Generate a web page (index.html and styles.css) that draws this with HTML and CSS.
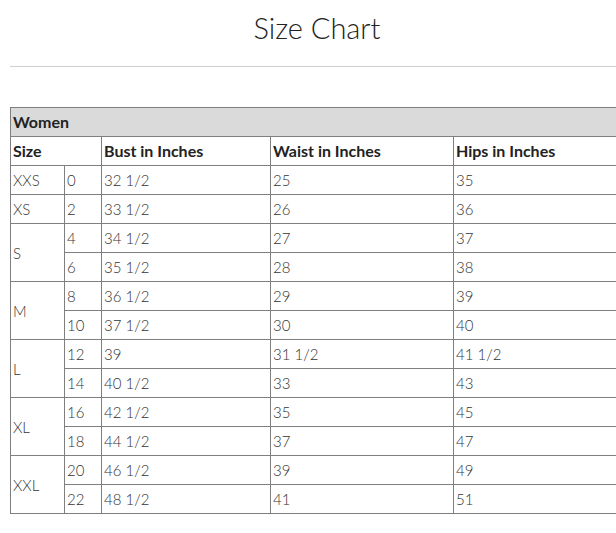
FILE: index.html
```html
<!DOCTYPE html>
<html>
<head>
<meta charset="utf-8">
<link rel="stylesheet" href="styles.css">
</head>
<body>
<div class="page">
  <h1 class="title">Size Chart</h1>
  <div class="rule"></div>
  <table class="chart">
    <colgroup>
      <col class="c1"><col class="c2"><col class="c3"><col class="c4"><col class="c5">
    </colgroup>
    <tr class="group"><th colspan="5">Women</th></tr>
    <tr class="head"><th colspan="2">Size</th><th>Bust in Inches</th><th>Waist in Inches</th><th>Hips in Inches</th></tr>
    <tr><td>XXS</td><td>0</td><td>32 1/2</td><td>25</td><td>35</td></tr>
    <tr><td>XS</td><td>2</td><td>33 1/2</td><td>26</td><td>36</td></tr>
    <tr><td rowspan="2">S</td><td>4</td><td>34 1/2</td><td>27</td><td>37</td></tr>
    <tr><td>6</td><td>35 1/2</td><td>28</td><td>38</td></tr>
    <tr><td rowspan="2">M</td><td>8</td><td>36 1/2</td><td>29</td><td>39</td></tr>
    <tr><td>10</td><td>37 1/2</td><td>30</td><td>40</td></tr>
    <tr><td rowspan="2">L</td><td>12</td><td>39</td><td>31 1/2</td><td>41 1/2</td></tr>
    <tr><td>14</td><td>40 1/2</td><td>33</td><td>43</td></tr>
    <tr><td rowspan="2">XL</td><td>16</td><td>42 1/2</td><td>35</td><td>45</td></tr>
    <tr><td>18</td><td>44 1/2</td><td>37</td><td>47</td></tr>
    <tr><td rowspan="2">XXL</td><td>20</td><td>46 1/2</td><td>39</td><td>49</td></tr>
    <tr><td>22</td><td>48 1/2</td><td>41</td><td>51</td></tr>
  </table>
</div>
</body>
</html>
```

FILE: styles.css
```css
html, body {
  margin: 0;
  padding: 0;
  background: #fff;
  overflow: hidden;
}
.page {
  width: 616px;
  height: 533px;
  overflow: hidden;
  font-family: Lato, "Open Sans", sans-serif;
  color: #222;
}
.title {
  margin: 0;
  padding: 12px 0 0 18px;
  height: 66px;
  box-sizing: border-box;
  line-height: 32px;
  font-size: 29px;
  font-weight: 300;
  text-align: center;
  color: #222;
}
.rule {
  margin-left: 10px;
  height: 0;
  border-top: 1px solid #cfcfcf;
}
.chart {
  margin: 40px 0 0 10px;
  border-collapse: collapse;
  table-layout: fixed;
  width: 627px;
  font-size: 15px;
}
.c1 { width: 54px; }
.c2 { width: 37px; }
.c3 { width: 169px; }
.c4 { width: 183px; }
.c5 { width: 184px; }
.chart th, .chart td {
  border: 1px solid #7f7f7f;
  height: 29px;
  padding: 0 2px;
  text-align: left;
  vertical-align: middle;
  box-sizing: border-box;
  line-height: 20px;
}
.chart th {
  font-weight: 700;
  font-size: 16px;
  color: #222;
}
.chart td {
  font-weight: 300;
  color: #333;
}
.group th {
  background: #dadada;
}
```
